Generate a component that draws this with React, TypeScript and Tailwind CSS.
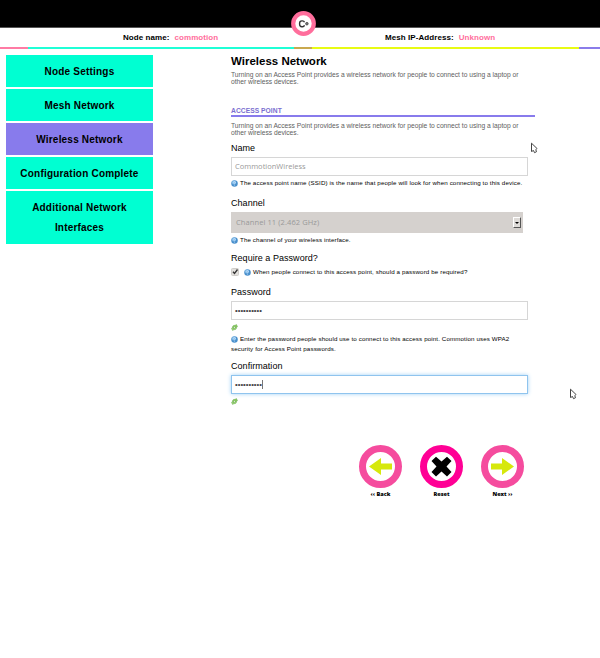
import React from "react";

const sans = "font-['Liberation_Sans',Arial,sans-serif]";

const navItems = [
  { label: "Node Settings" },
  { label: "Mesh Network" },
  { label: "Wireless Network", active: true },
  { label: "Configuration Complete" },
];

function HelpIcon() {
  return (
    <svg className="h-[7px] w-[7px] shrink-0" viewBox="0 0 14 14">
      <circle cx="7" cy="7" r="6.5" fill="#4a90cc" />
      <circle cx="6" cy="5" r="4" fill="#8cc2ec" />
      <path d="M5 5.2Q5.200 3.300 7 3.300T9 5Q9 6.200 7 7.500V8.500M7 10V11.300" fill="none" stroke="#d5eaff" strokeWidth="1.200" />
    </svg>
  );
}

function RefreshIcon() {
  return (
    <svg className="h-[7px] w-[7px]" viewBox="0 0 14 14">
      <path d="M2.500 7Q3 2.500 8 2.500H9.500L10.500 .8L13 5L8.500 7L9 5.200H8Q5.500 5 5 7Z" fill="#8fd060" stroke="#4c9a2e" strokeWidth=".9" />
      <path d="M11.500 7Q11 11.500 6 11.500H4.500L3.500 13.200L1 9L5.500 7.500L5 9H6Q8.500 9 9 7Z" fill="#a5dc7c" stroke="#4c9a2e" strokeWidth=".9" />
    </svg>
  );
}

function Cursor() {
  return (
    <svg className="block h-[12px] w-[8px]" viewBox="0 0 8 12">
      <path d="M1.500 1.200V9.500L3.500 8.500L4.500 10.700L6.500 9.700L5.800 7.800L7 6.500Z" fill="#fff" stroke="#444" strokeWidth="1" />
    </svg>
  );
}

function Description() {
  return (
    <p className="h-[14px] text-[6.7px] leading-[7px] tracking-[-0.007px] whitespace-nowrap text-[#606060]">
      Turning on an Access Point provides a wireless network for people to connect to using a laptop or
      <br />
      other wireless devices.
    </p>
  );
}

function Label({ children }: { children: React.ReactNode }) {
  return <div className="h-3 text-[9px] leading-3 tracking-[0.04px] whitespace-nowrap text-black">{children}</div>;
}

function Hint({ children }: { children: React.ReactNode }) {
  return (
    <div className="flex h-[10px] items-center gap-[2px] text-[6.2px] leading-[10px] tracking-[0.122px] whitespace-nowrap text-black">
      <HelpIcon />
      <span>{children}</span>
    </div>
  );
}

function Dots() {
  return <span className="text-[7.700px] leading-[10px] text-[#444]">••••••••••</span>;
}

function RoundButton({ label, ring, children }: { label: string; ring: string; children: React.ReactNode }) {
  return (
    <div className="flex w-[43px] flex-col items-center">
      <svg className="h-[43px] w-[43px]" viewBox="0 0 43 43">
        <circle cx="21.500" cy="21.500" r="18" fill="#fff" stroke={ring} strokeWidth="7" />
        {children}
      </svg>
      <span className="mt-[2px] font-['Noto_Sans',sans-serif] text-[5.600px] leading-[8px] font-black whitespace-nowrap text-black">{label}</span>
    </div>
  );
}

export default function App() {
  return (
    <div className={`h-[658px] w-[600px] overflow-hidden bg-white ${sans}`}>
      <header className="relative">
        <div className="h-[27px] bg-black" />
        <div className="h-px bg-[#555]" />
        <div className="flex h-[19px] items-center pt-px text-[8px] font-bold tracking-[0.07px] whitespace-nowrap">
          <div className="ml-[123px] flex w-[262px] gap-[5px]">
            <span className="text-black">Node name:</span>
            <span className="text-[#ff6e9c]">commotion</span>
          </div>
          <div className="flex gap-[5px]">
            <span className="text-black">Mesh IP-Address:</span>
            <span className="text-[#ff6e9c]">Unknown</span>
          </div>
        </div>
        <div className="flex h-[2px]">
          <span className="w-[28px] bg-[#ff7ba4]" />
          <span className="w-[266px] bg-[#1fffd6]" />
          <span className="w-[18px] bg-[#c9a94f]" />
          <span className="w-[267px] bg-[#e8fb14]" />
          <span className="flex-1 bg-[#8a7cea]" />
        </div>
        <svg className="absolute top-[11px] left-[291px] h-[25px] w-[25px]" viewBox="0 0 25 25">
          <circle cx="12.500" cy="12.500" r="10.300" fill="#fff" stroke="#ff6e9c" strokeWidth="4.200" />
          <path d="M13.500 11.300Q13 9.900 11.500 9.900H10.800Q8.600 9.900 8.600 12.300V13.300Q8.600 15.700 10.800 15.700H11.500Q13 15.700 13.500 14.300" fill="none" stroke="#333" strokeWidth="1.400" />
          <circle cx="15.900" cy="12.700" r="1.300" fill="#777" stroke="#444" strokeWidth=".8" />
        </svg>
      </header>

      <div className="flex">
        <nav className="mt-[6px] ml-[6px] flex w-[147px] flex-col gap-[2px] text-center text-[10px] font-bold tracking-[0.2px] text-black">
          {navItems.map((item) => (
            <div
              key={item.label}
              className={`flex h-8 items-center justify-center whitespace-nowrap ${item.active ? "bg-[#887bec]" : "bg-[#00ffd2]"}`}
            >
              {item.label}
            </div>
          ))}
          <div className="flex h-[53px] flex-col justify-center bg-[#00ffd2] leading-[20px]">
            <span>Additional Network</span>
            <span>Interfaces</span>
          </div>
        </nav>

        <main className="ml-[78px] w-[304px] pt-[5px]">
          <h1 className="h-[14px] text-[11.500px] leading-[14px] font-bold whitespace-nowrap text-black">Wireless Network</h1>
          <div className="mt-[3px]"><Description /></div>
          <h2 className="mt-[21px] h-[11px] border-b-2 border-[#887bec] text-[6.700px] leading-[9px] font-bold tracking-[0.05px] whitespace-nowrap text-[#7a6ed0]">
            ACCESS POINT
          </h2>
          <div className="mt-[5px]"><Description /></div>

          <div className="mt-[6px]"><Label>Name</Label></div>
          <div className="mt-[3px] flex h-[19px] w-[297px] items-center border border-[#d6d6d6] pl-[3px] font-['Open_Sans',sans-serif] text-[7.500px] whitespace-nowrap text-[#999]">
            CommotionWireless
          </div>
          <div className="mt-[2px]"><Hint>The access point name (SSID) is the name that people will look for when connecting to this device.</Hint></div>

          <div className="mt-[9px]"><Label>Channel</Label></div>
          <div className="mt-[3px] flex h-[21px] w-[292px] items-center justify-between bg-[#d5d1ce] pr-[2px] pl-[5px] font-['Open_Sans',sans-serif] text-[7.500px] tracking-[0.09px] whitespace-nowrap text-[#999]">
            <span>Channel 11 (2.462 GHz)</span>
            <span className="flex h-[11px] w-[8px] items-center justify-center border-t border-r border-b border-l border-t-white border-r-[#555] border-b-[#555] border-l-white bg-[#dedbd8]">
              <svg className="h-[2px] w-[4px]" viewBox="0 0 4 2"><path d="M0 0H4L2 2Z" fill="#000" /></svg>
            </span>
          </div>
          <div className="mt-[2px]"><Hint>The channel of your wireless interface.</Hint></div>

          <div className="mt-[7px]"><Label>Require a Password?</Label></div>
          <div className="mt-[3px] flex items-center gap-[5px]">
            <svg className="h-2 w-2" viewBox="0 0 8 8">
              <rect x=".5" y=".5" width="7" height="7" rx="1" fill="#e2e0dd" stroke="#cfccc8" />
              <path d="M2 3.800L3.500 5.500L6.500 1.500" fill="none" stroke="#333" strokeWidth="1.300" />
            </svg>
            <Hint>When people connect to this access point, should a password be required?</Hint>
          </div>

          <div className="mt-[9px]"><Label>Password</Label></div>
          <div className="mt-[3px] flex h-[19px] w-[297px] items-center border border-[#d6d6d6] pl-[3px]"><Dots /></div>
          <div className="mt-[4px] flex h-[7px]"><RefreshIcon /></div>
          <div className="mt-[3px]"><Hint>Enter the password people should use to connect to this access point. Commotion uses WPA2</Hint></div>
          <div className="h-[10px] text-[6.200px] leading-[10px] tracking-[0.122px] whitespace-nowrap text-black">security for Access Point passwords.</div>

          <div className="mt-[6px]"><Label>Confirmation</Label></div>
          <div className="mt-[3px] flex h-[19px] w-[297px] items-center border border-[#8fc4ee] pl-[3px] shadow-[0_0_4px_#9fd0f5]">
            <Dots />
            <span className="h-[9px] w-px bg-[#777]" />
          </div>
          <div className="mt-[4px] flex h-[7px]"><RefreshIcon /></div>

          <div className="mt-[40px] ml-[128px] flex gap-[18px]">
            <RoundButton label="‹‹ Back" ring="#f54c9e">
              <path d="M10 21.500L22 13V18.500H33V24.500H22V30Z" fill="#d6e80c" />
            </RoundButton>
            <RoundButton label="Reset" ring="#ff0095">
              <path d="M11.500 16L16 11.700L21.500 16.500L27 11.700L31.500 16L26.500 21.500L31.500 27L27 31.500L21.500 26.500L16 31.500L11.500 27L16.500 21.500Z" fill="#000" />
            </RoundButton>
            <RoundButton label="Next ››" ring="#f54c9e">
              <path d="M33 21.500L21 13V18.500H10V24.500H21V30Z" fill="#d6e80c" />
            </RoundButton>
          </div>
        </main>
      </div>

      <div className="absolute top-[142px] left-[530px]"><Cursor /></div>
      <div className="absolute top-[388px] left-[569px]"><Cursor /></div>
    </div>
  );
}
